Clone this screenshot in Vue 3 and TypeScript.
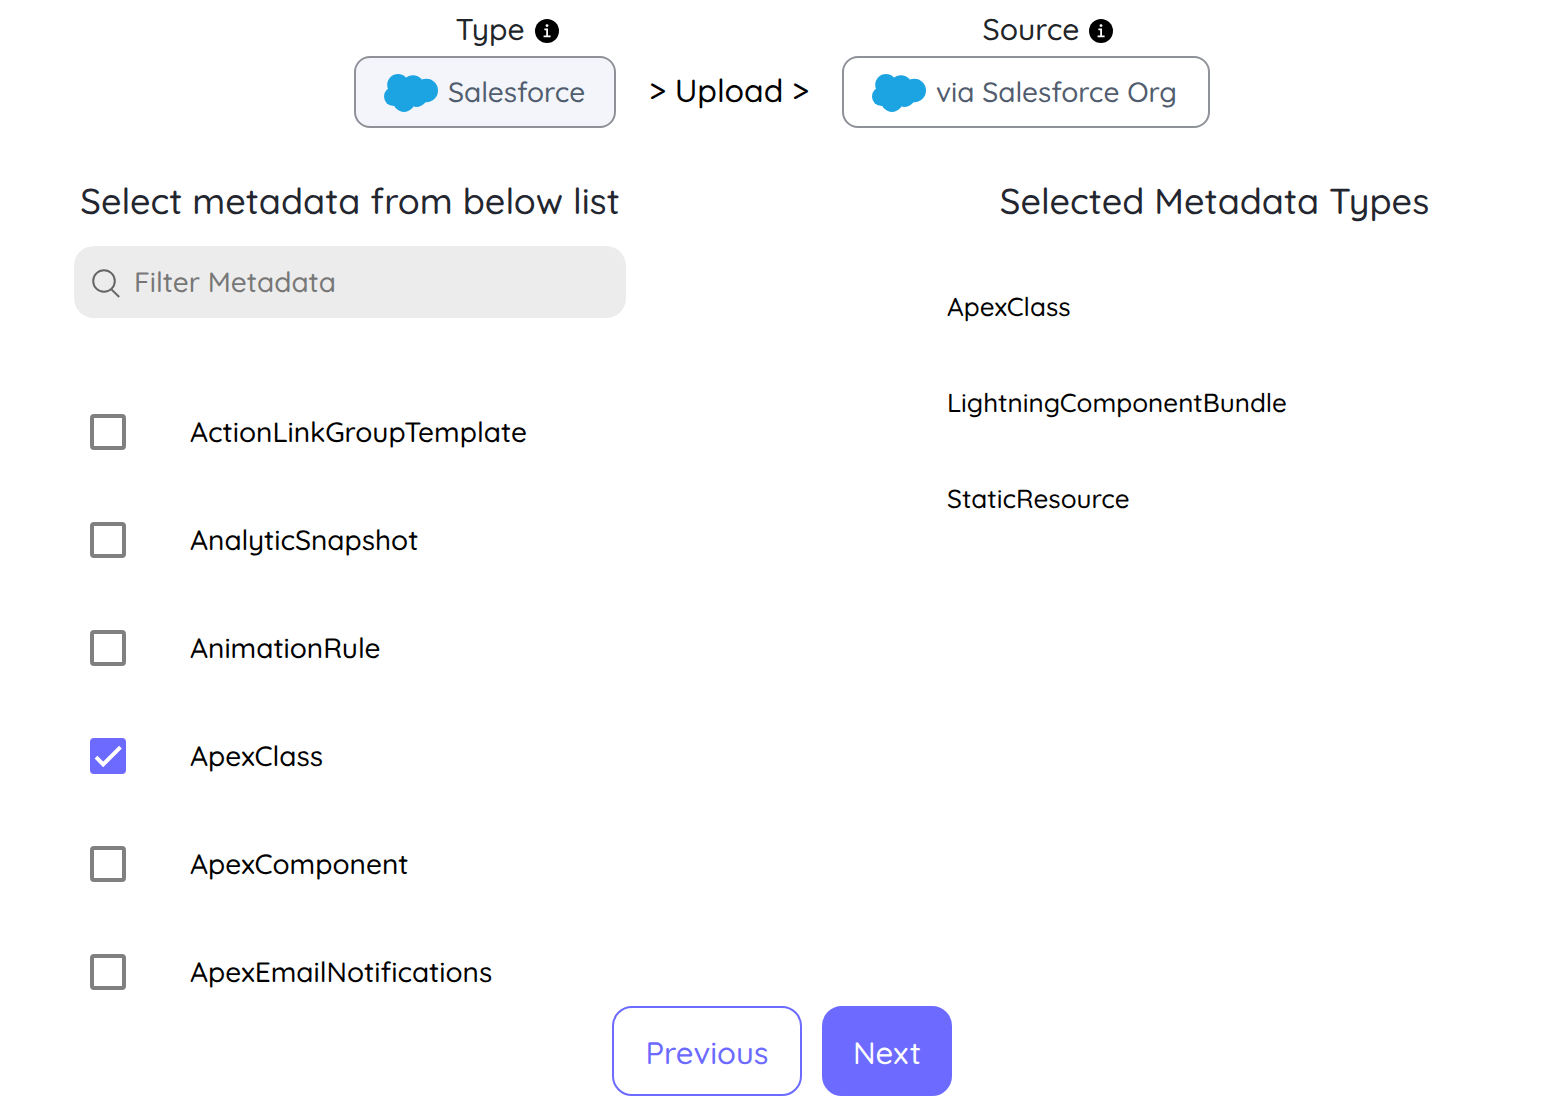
<script setup lang="ts">
import { computed, ref } from 'vue'

interface MetadataItem {
  name: string
  checked: boolean
}

const filter = ref('')

const items = ref<MetadataItem[]>([
  { name: 'ActionLinkGroupTemplate', checked: false },
  { name: 'AnalyticSnapshot', checked: false },
  { name: 'AnimationRule', checked: false },
  { name: 'ApexClass', checked: true },
  { name: 'ApexComponent', checked: false },
  { name: 'ApexEmailNotifications', checked: false },
])

const otherSelected = ['LightningComponentBundle', 'StaticResource']

const visibleItems = computed(() =>
  items.value.filter((item) => item.name.toLowerCase().includes(filter.value.toLowerCase())),
)

const selected = computed(() => [
  ...items.value.filter((item) => item.checked).map((item) => item.name),
  ...otherSelected,
])

const steps = [
  { id: 'type', label: 'Type', value: 'Salesforce', filled: true },
  { id: 'source', label: 'Source', value: 'via Salesforce Org', filled: false },
]
</script>

<template>
  <div class="page">
    <header class="flow">
      <template v-for="(step, index) in steps" :key="step.id">
        <p v-if="index > 0" class="action">&gt; Upload &gt;</p>
        <div class="step">
          <div class="step-label">
            <span>{{ step.label }}</span>
            <svg class="info" viewBox="0 0 24 24" aria-hidden="true">
              <circle cx="12" cy="12" r="12" />
              <circle cx="12" cy="6.6" r="1.4" class="mark" />
              <path class="mark" d="M9.4 9.6h3.6v7h2.6v1.6H8.6v-1.6h2.6v-5.4H9.4z" />
            </svg>
          </div>
          <button type="button" class="tile" :class="[step.id, { filled: step.filled }]">
            <svg class="cloud" viewBox="4 3 54 40" aria-hidden="true">
              <circle cx="18" cy="16.8" r="10.8" />
              <circle cx="33" cy="18" r="10.8" />
              <circle cx="46.3" cy="22.5" r="11.7" />
              <circle cx="13.4" cy="28.5" r="9.4" />
              <circle cx="24" cy="33.3" r="10.7" />
              <circle cx="36.5" cy="28.3" r="10.7" />
            </svg>
            <span>{{ step.value }}</span>
          </button>
        </div>
      </template>
    </header>

    <main class="columns">
      <section class="available">
        <h2>Select metadata from below list</h2>
        <label class="search">
          <svg viewBox="0 -1 28 28" aria-hidden="true">
            <circle cx="12" cy="12" r="10.8" />
            <path d="M19.4 20.4 27.2 28" />
          </svg>
          <input v-model="filter" type="text" placeholder="Filter Metadata" aria-label="Filter Metadata" />
        </label>
        <ul class="options">
          <li v-for="item in visibleItems" :key="item.name">
            <label class="option">
              <span class="box">
                <input v-model="item.checked" type="checkbox" />
                <svg v-if="item.checked" viewBox="0 0 36 36" aria-hidden="true">
                  <path d="M6 19.2 13.2 26.4 30.5 9.2" />
                </svg>
              </span>
              <span class="name">{{ item.name }}</span>
            </label>
          </li>
        </ul>
      </section>

      <section class="chosen">
        <h2>Selected Metadata Types</h2>
        <ul>
          <li v-for="name in selected" :key="name">{{ name }}</li>
        </ul>
      </section>
    </main>

    <footer class="nav">
      <button type="button" class="previous">Previous</button>
      <button type="button" class="next">Next</button>
    </footer>
  </div>
</template>

<style>
body {
  margin: 0;
  background: #fff;
}
</style>

<style scoped>
.page {
  padding: 4px 0 22px;
  color: #000;
  font-family: Quicksand, Lato, sans-serif;
  font-size: 28px;
  font-weight: 540;
  text-rendering: geometricPrecision;
}

.page * {
  box-sizing: border-box;
}

button,
input {
  font: inherit;
  text-rendering: inherit;
}

.flow {
  display: flex;
  justify-content: center;
  align-items: flex-end;
  padding-right: 2px;
}

.step-label {
  display: flex;
  justify-content: center;
  align-items: center;
  gap: 10px;
  height: 52px;
  padding: 0 0 2px 44px;
  color: #212529;
  font-size: 30px;
}

.info {
  width: 24px;
  height: 24px;
  margin-top: 4px;
}

.info .mark {
  fill: #fff;
}

.tile {
  display: flex;
  align-items: center;
  gap: 10px;
  height: 72px;
  padding: 0 28px 2px;
  border: 2px solid #909299;
  border-radius: 16px;
  background: #fff;
  color: #515d6e;
  white-space: nowrap;
}

.tile.type {
  min-width: 262px;
}

.tile.source {
  min-width: 368px;
}

.tile.filled {
  background: #f3f5fa;
}

.cloud {
  width: 54px;
  height: 40px;
  overflow: visible;
  fill: #1ba4e1;
}

.action {
  width: 226px;
  margin: 0;
  padding-bottom: 2px;
  font-size: 32px;
  line-height: 72px;
  text-align: center;
}

.columns {
  display: grid;
  grid-template-columns: 552fr 535fr;
  column-gap: 22.8%;
  padding: 49px 84px 0 74px;
}

h2 {
  margin: 0;
  color: #23262f;
  font-size: 36px;
  font-weight: inherit;
  line-height: 48px;
  text-align: center;
  white-space: nowrap;
}

ul {
  margin: 0;
  padding: 0;
  list-style: none;
}

.search {
  display: flex;
  align-items: center;
  gap: 14px;
  height: 72px;
  margin-top: 21px;
  padding: 0 18px;
  border-radius: 20px;
  background: #ececec;
}

.search svg {
  flex: none;
  width: 28px;
  height: 28px;
  overflow: visible;
  fill: none;
  stroke: #666;
  stroke-width: 2;
}

.search input {
  flex: 1;
  min-width: 0;
  padding: 0 0 2px;
  border: 0;
  outline: 0;
  background: none;
  color: #000;
}

.search input::placeholder {
  color: #777;
  opacity: 1;
}

.options {
  display: grid;
  gap: 72px;
  padding: 96px 16px 16px;
}

.option {
  display: flex;
  align-items: center;
  gap: 64px;
  height: 36px;
}

.name {
  padding-bottom: 2px;
}

.box {
  display: grid;
}

.box > * {
  grid-area: 1 / 1;
  width: 36px;
  height: 36px;
}

.box input {
  margin: 0;
  border: 4px solid #808080;
  border-radius: 4px;
  appearance: none;
}

.box input:checked {
  border-color: #6c6aff;
  background: #6c6aff;
}

.box svg {
  fill: none;
  stroke: #fff;
  stroke-width: 4;
  pointer-events: none;
}

.chosen ul {
  padding-top: 34px;
  font-size: 26px;
  line-height: 96px;
}

.nav {
  display: flex;
  justify-content: center;
  gap: 20px;
  padding-right: 2px;
}

.nav button {
  height: 90px;
  padding: 2px 0 0;
  border: 2px solid #6c6aff;
  border-radius: 20px;
  font-size: 31px;
  font-weight: 500;
}

.previous {
  min-width: 190px;
  background: #fff;
  color: #6c6aff;
}

.nav .next {
  min-width: 130px;
  background: #6c6aff;
  color: #fff;
}
</style>
